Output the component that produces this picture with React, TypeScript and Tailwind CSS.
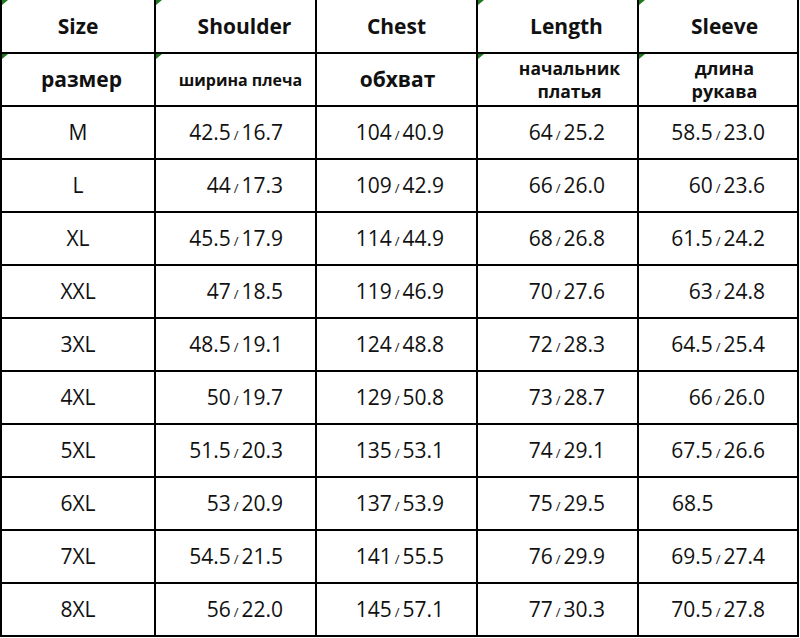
import React from 'react';

type Row = {
  size: string;
  shoulder: [string, string];
  chest: [string, string];
  length: [string, string];
  sleeve: [string, string?];
};

const rows: Row[] = [
  { size: 'M', shoulder: ['42.5', '16.7'], chest: ['104', '40.9'], length: ['64', '25.2'], sleeve: ['58.5', '23.0'] },
  { size: 'L', shoulder: ['44', '17.3'], chest: ['109', '42.9'], length: ['66', '26.0'], sleeve: ['60', '23.6'] },
  { size: 'XL', shoulder: ['45.5', '17.9'], chest: ['114', '44.9'], length: ['68', '26.8'], sleeve: ['61.5', '24.2'] },
  { size: 'XXL', shoulder: ['47', '18.5'], chest: ['119', '46.9'], length: ['70', '27.6'], sleeve: ['63', '24.8'] },
  { size: '3XL', shoulder: ['48.5', '19.1'], chest: ['124', '48.8'], length: ['72', '28.3'], sleeve: ['64.5', '25.4'] },
  { size: '4XL', shoulder: ['50', '19.7'], chest: ['129', '50.8'], length: ['73', '28.7'], sleeve: ['66', '26.0'] },
  { size: '5XL', shoulder: ['51.5', '20.3'], chest: ['135', '53.1'], length: ['74', '29.1'], sleeve: ['67.5', '26.6'] },
  { size: '6XL', shoulder: ['53', '20.9'], chest: ['137', '53.9'], length: ['75', '29.5'], sleeve: ['68.5'] },
  { size: '7XL', shoulder: ['54.5', '21.5'], chest: ['141', '55.5'], length: ['76', '29.9'], sleeve: ['69.5', '27.4'] },
  { size: '8XL', shoulder: ['56', '22.0'], chest: ['145', '57.1'], length: ['77', '30.3'], sleeve: ['70.5', '27.8'] },
];

// little green "comment" marker in the cell corner, like the spreadsheet it came from
const Marker = () => (
  <span className="absolute left-0 top-0 w-0 h-0 border-t-[5px] border-r-[6px] border-t-[#1f7a1f] border-r-transparent" />
);

const Pair = ({ value }: { value: [string, string?] }) => {
  if (!value[1]) {
    return (
      <div className="bg-white flex items-center justify-start pl-[33px]">
        {value[0]}
      </div>
    );
  }
  return (
    <div className="bg-white flex items-center justify-end pr-[32px]">
      <span>{value[0]}</span>
      <span className="text-[13px] mx-[3px] text-[#222] self-end mb-[16px] leading-none">/</span>
      <span>{value[1]}</span>
    </div>
  );
};

export default function App() {
  return (
    <div className="w-[800px] h-[638px] bg-white" style={{ fontFamily: '"Open Sans", "Noto Sans", sans-serif' }}>
      <div className="grid grid-cols-[152px_159px_159px_159px_158px] grid-rows-[52px_repeat(11,51px)] gap-[2px] bg-black border-l-2 border-r-2 border-b-2 border-black w-[799px] text-[21px] text-[#111] leading-none">
        {/* English header */}
        <div className="relative bg-white flex items-center justify-center font-bold">
          <Marker />
          Size
        </div>
        <div className="relative bg-white flex items-center justify-center pl-[18px] font-bold">
          <Marker />
          Shoulder
        </div>
        <div className="bg-white flex items-center justify-center font-bold">Chest</div>
        <div className="relative bg-white flex items-center justify-center pl-[18px] font-bold">
          <Marker />
          Length
        </div>
        <div className="relative bg-white flex items-center justify-center pl-[13px] font-bold">
          <Marker />
          Sleeve
        </div>

        {/* Russian header */}
        <div className="relative bg-white flex items-center justify-center pl-[7px] font-bold">
          <Marker />
          размер
        </div>
        <div className="relative bg-white flex items-center justify-center pl-[10px] font-bold text-[16px]">
          <Marker />
          ширина плеча
        </div>
        <div className="bg-white flex items-center justify-center pl-[2px] font-bold">обхват</div>
        <div className="relative bg-white flex flex-col items-center justify-center pl-[24px] font-bold text-[17.5px] leading-[23px]">
          <Marker />
          <span>начальник</span>
          <span>платья</span>
        </div>
        <div className="relative bg-white flex flex-col items-center justify-center pl-[13px] font-bold text-[18px] leading-[23px]">
          <Marker />
          <span>длина</span>
          <span>рукава</span>
        </div>

        {rows.map((r) => (
          <React.Fragment key={r.size}>
            <div className="bg-white flex items-center justify-center">{r.size}</div>
            <Pair value={r.shoulder} />
            <Pair value={r.chest} />
            <Pair value={r.length} />
            <Pair value={r.sleeve} />
          </React.Fragment>
        ))}
      </div>
    </div>
  );
}
